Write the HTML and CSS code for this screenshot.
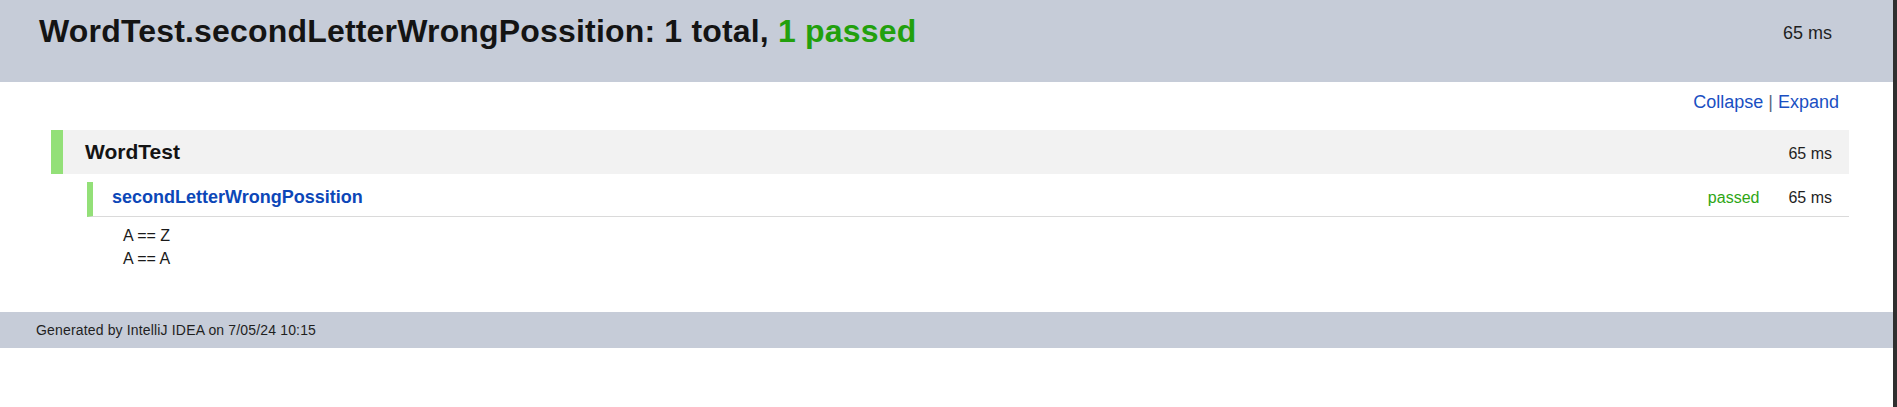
FILE: index.html
```html
<!DOCTYPE html>
<html lang="en">
<head>
<meta charset="utf-8">
<title>Test Results — WordTest.secondLetterWrongPossition</title>
<link rel="stylesheet" href="styles.css">
</head>
<body>
<div class="page">
  <header class="header">
    <h1 class="title">WordTest.secondLetterWrongPossition: 1 total, <span class="ok">1 passed</span></h1>
    <div class="header-time">65 ms</div>
  </header>
  <main class="content">
    <div class="toolbar"><a class="link" href="#">Collapse</a><span class="sep"> | </span><a class="link" href="#">Expand</a></div>
    <div class="suite">
      <h3 class="suite-name">WordTest</h3>
      <span class="time">65 ms</span>
    </div>
    <div class="test">
      <a class="test-name" href="#">secondLetterWrongPossition</a>
      <div class="test-meta">
        <span class="status">passed</span>
        <span class="time">65 ms</span>
      </div>
    </div>
    <div class="output">
      <div class="out-line">A == Z</div>
      <div class="out-line">A == A</div>
    </div>
  </main>
  <footer class="footer">Generated by IntelliJ IDEA on 7/05/24 10:15</footer>
</div>
</body>
</html>
```
FILE: styles.css
```css
html, body {
  margin: 0;
  padding: 0;
  height: 100%;
}
body {
  background: #ffffff;
  font-family: "Liberation Sans", Arial, sans-serif;
  color: #222222;
  font-size: 16px;
}
.page {
  box-sizing: border-box;
  min-height: 100%;
  border-right: 4px solid #2f2f2f;
}
.header {
  box-sizing: border-box;
  height: 82px;
  background: #c6ccd8;
  display: flex;
  justify-content: space-between;
  align-items: flex-start;
  padding: 13px 61px 0 39px;
}
.title {
  margin: 0;
  font-size: 32px;
  font-weight: bold;
  color: #141414;
  line-height: normal;
  letter-spacing: 0.18px;
}
.ok {
  color: #22a00d;
}
.header-time {
  font-size: 18px;
  color: #1f1f1f;
  margin-top: 10px;
}
.content {
  padding: 0 44px 0 51px;
}
.toolbar {
  display: flex;
  justify-content: flex-end;
  font-size: 18px;
  padding: 10px 10px 0 0;
  margin-bottom: 17px;
  white-space: pre;
}
.link {
  color: #1a4fc2;
  text-decoration: none;
}
.sep {
  color: #5c6780;
}
.suite {
  display: flex;
  justify-content: space-between;
  align-items: baseline;
  background: #f2f2f2;
  border-left: 12px solid #93e078;
  padding: 10px 17px 10px 22px;
}
.suite-name {
  margin: 0;
  font-size: 21px;
  font-weight: bold;
  color: #141414;
}
.time {
  font-size: 16px;
  color: #1f1f1f;
}
.test {
  display: flex;
  justify-content: space-between;
  align-items: baseline;
  margin: 8px 0 0 36px;
  border-left: 6px solid #93e078;
  border-bottom: 1px solid #dadada;
  padding: 5px 17px 8px 19px;
}
.test-name {
  font-size: 18px;
  font-weight: bold;
  color: #0c47b8;
  text-decoration: none;
}
.test-meta {
  display: flex;
  gap: 29px;
  align-items: baseline;
}
.status {
  font-size: 16px;
  color: #2ea614;
}
.output {
  padding: 8px 0 0 72px;
  margin-bottom: 42px;
}
.out-line {
  line-height: 22.7px;
  color: #1a1a1a;
}
.footer {
  background: #c6ccd8;
  font-size: 14px;
  color: #1f1f1f;
  padding: 10px 36px;
  letter-spacing: 0.16px;
}
```
